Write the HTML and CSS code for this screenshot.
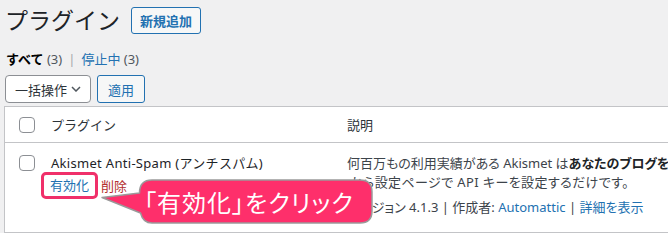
FILE: index.html
```html
<!DOCTYPE html>
<html lang="ja">
<head>
<meta charset="utf-8">
<title>プラグイン</title>
<link rel="stylesheet" href="styles.css">
</head>
<body>
<div class="wrap">
  <div class="page-head">
    <h1 class="page-title">プラグイン</h1>
    <a class="btn-outline add-new" href="#">新規追加</a>
  </div>

  <ul class="subsubsub">
    <li class="current">すべて <span class="count">(3)</span></li>
    <li class="sep">|</li>
    <li><a href="#">停止中</a> <span class="count">(3)</span></li>
  </ul>

  <div class="tablenav">
    <div class="select">
      <span>一括操作</span>
      <svg class="chev" width="10" height="6" viewBox="0 0 10 6"><polyline points="1,1 5,5 9,1" fill="none" stroke="#50575e" stroke-width="1.5"/></svg>
    </div>
    <a class="btn-outline apply" href="#">適用</a>
  </div>

  <div class="table">
    <div class="thead">
      <div class="cell check"><span class="checkbox"></span></div>
      <div class="cell name">プラグイン</div>
      <div class="cell desc">説明</div>
    </div>
    <div class="row">
      <div class="cell check"><span class="checkbox"></span></div>
      <div class="cell name">
        <div class="plugin-title">Akismet Anti-Spam (アンチスパム)</div>
        <div class="row-actions">
          <span class="highlight"><a href="#">有効化</a></span>
          <a class="delete" href="#">削除</a>
        </div>
      </div>
      <div class="cell desc">
        <div class="desc-line">何百万もの利用実績がある Akismet は<strong>あなたのブログを</strong></div>
        <div class="desc-line">から設定ページで API キーを設定するだけです。</div>
        <div class="desc-meta">バージョン 4.1.3 | 作成者: <a href="#">Automattic</a> | <a href="#">詳細を表示</a></div>
      </div>
    </div>
  </div>
</div>

<svg class="callout-shape" width="668" height="233" viewBox="0 0 668 233">
  <path d="M139.5,193 L102,197.5 L140.5,213 Q143,223 152,223 L360,223 Q372,223 372,211 L372,192 Q372,180 360,180 L152,180 Q139.5,180 139.5,193 Z" fill="#fe2f6b" stroke="#9a9a9a" stroke-width="1.5" stroke-linejoin="round"/>
</svg>
<div class="callout-text">「有効化」をクリック</div>
</body>
</html>
```

FILE: styles.css
```css
* { box-sizing: border-box; }
html, body { margin: 0; padding: 0; }
body {
  width: 668px;
  height: 233px;
  overflow: hidden;
  background: #f0f0f1;
  color: #3c434a;
  font-family: "Noto Sans", "Noto Sans CJK JP", sans-serif;
  font-size: 13px;
  position: relative;
}
a { color: #2271b1; text-decoration: none; }

.wrap { padding-left: 4px; }

.page-head {
  display: flex;
  align-items: center;
  height: 30px;
  margin-top: 5px;
}
.page-title {
  margin: 0 0 0 1px;
  font-size: 23px;
  font-weight: 400;
  line-height: 30px;
  color: #1d2327;
}
.btn-outline {
  display: inline-flex;
  align-items: center;
  justify-content: center;
  border: 1px solid #2271b1;
  border-radius: 3px;
  background: #f6f7f7;
  color: #2271b1;
  font-size: 13px;
}
.add-new {
  margin-left: 11px;
  width: 70px;
  height: 27px;
  font-weight: 600;
  margin-top: 1px;
}

.subsubsub {
  list-style: none;
  margin: 14px 0 0 2px;
  padding: 0;
  display: flex;
  gap: 6px;
  line-height: 20px;
  height: 20px;
}
.subsubsub .current { color: #000; font-weight: 600; }
.subsubsub .count { color: #50575e; font-weight: 400; }
.subsubsub .sep { color: #a7aaad; }

.tablenav {
  display: flex;
  margin: 6px 0 0 1px;
  height: 28px;
  gap: 6px;
}
.select {
  width: 86px;
  height: 28px;
  border: 1px solid #8c8f94;
  border-radius: 4px;
  background: #fff;
  display: flex;
  align-items: center;
  justify-content: space-between;
  padding: 0 9px 0 9px;
  color: #2c3338;
}
.chev { display: block; }
.apply { width: 48px; height: 28px; }

.table {
  margin-top: 3px;
  width: 720px;
  border: 1px solid #c3c4c7;
  background: #fff;
}
.thead, .row { display: flex; }
.thead { height: 36px; border-bottom: 1px solid #c3c4c7; align-items: center; color: #2c3338; }
.row { height: 90px; border-bottom: 1px solid #c3c4c7; align-items: flex-start; }
.cell { flex: none; }
.cell.check { width: 36px; padding-left: 14px; display: flex; }
.cell.name { width: 296px; padding-left: 10px; }
.cell.desc { flex: 1 0 auto; padding-left: 10px; }
.checkbox {
  display: block;
  width: 16px;
  height: 16px;
  border: 1px solid #8c8f94;
  border-radius: 4px;
  background: #fff;
}
.row .cell.check { padding-top: 12px; }
.row .cell.name { padding-top: 10px; }
.plugin-title { line-height: 20px; color: #1d2327; white-space: nowrap; letter-spacing: 0.3px; }
.row-actions { display: flex; align-items: center; margin-top: -1px; gap: 3px; }
.highlight {
  display: inline-block;
  margin-left: -10px;
  border: 3px solid #f0306a;
  border-radius: 5px;
  padding: 2px 6px;
  line-height: 17px;
}
.delete { color: #b32d2e; }

.row .cell.desc { padding-top: 11px; font-feature-settings: "palt"; }
.desc-line { line-height: 19px; white-space: nowrap; }
.desc-line + .desc-line { padding-left: 3px; letter-spacing: 0.4px; }
.desc-line strong { font-weight: 700; color: #1d2327; }
.desc-meta { margin-top: 6px; line-height: 19px; white-space: nowrap; }

.callout-shape { position: absolute; left: 0; top: 0; pointer-events: none; }
.callout-text {
  position: absolute;
  left: 139px;
  top: 180px;
  width: 233px;
  height: 43px;
  display: flex;
  align-items: center;
  padding-left: 5px;
  color: #fff;
  font-size: 24px;
  font-family: "Noto Sans CJK JP", sans-serif;
  font-feature-settings: "palt";
  letter-spacing: 1px;
}
```
